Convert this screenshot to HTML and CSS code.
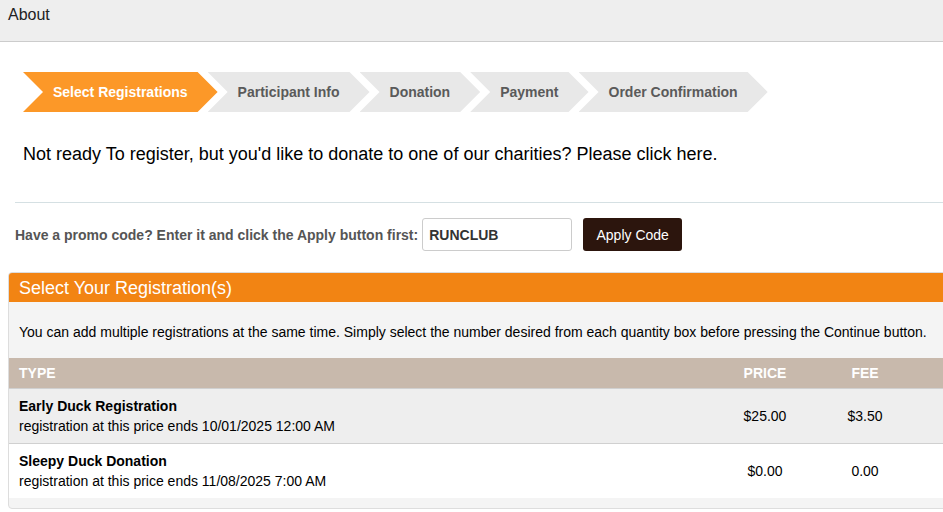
FILE: index.html
```html
<!DOCTYPE html>
<html lang="en">
<head>
<meta charset="utf-8">
<title>About</title>
<link rel="stylesheet" href="styles.css">
</head>
<body>
<header class="topbar">About</header>
<main class="page">
  <ol class="wizard">
    <li class="step active">Select Registrations</li>
    <li class="step">Participant Info</li>
    <li class="step">Donation</li>
    <li class="step">Payment</li>
    <li class="step">Order Confirmation</li>
  </ol>
  <p class="intro">Not ready To register, but you'd like to donate to one of our charities? Please click here.</p>
  <hr class="divider">
  <form class="promo">
    <label class="promo-label" for="promo">Have a promo code? Enter it and click the Apply button first:</label>
    <input class="promo-input" id="promo" type="text" value="RUNCLUB">
    <button class="promo-btn" type="button">Apply Code</button>
  </form>
  <section class="panel">
    <h2 class="panel-title">Select Your Registration(s)</h2>
    <p class="panel-note">You can add multiple registrations at the same time. Simply select the number desired from each quantity box before pressing the Continue button.</p>
    <table class="reg-table">
      <colgroup>
        <col>
        <col class="col-num">
        <col class="col-num">
        <col class="col-num">
      </colgroup>
      <thead>
        <tr>
          <th>TYPE</th>
          <th class="num">PRICE</th>
          <th class="num">FEE</th>
          <th class="num"></th>
        </tr>
      </thead>
      <tbody>
        <tr class="row-alt">
          <td><div class="reg-name">Early Duck Registration</div><div>registration at this price ends 10/01/2025 12:00 AM</div></td>
          <td class="num">$25.00</td>
          <td class="num">$3.50</td>
          <td class="num"></td>
        </tr>
        <tr>
          <td><div class="reg-name">Sleepy Duck Donation</div><div>registration at this price ends 11/08/2025 7:00 AM</div></td>
          <td class="num">$0.00</td>
          <td class="num">0.00</td>
          <td class="num"></td>
        </tr>
      </tbody>
    </table>
    <div class="panel-foot"></div>
  </section>
</main>
</body>
</html>
```
FILE: styles.css
```css
html, body {
  margin: 0;
  padding: 0;
}
body {
  font-family: "Liberation Sans", Arial, sans-serif;
  color: #111;
  background: #fff;
  overflow-x: hidden;
}

.topbar {
  height: 42px;
  box-sizing: border-box;
  background: #eeeeee;
  border-bottom: 1px solid #cccccc;
  padding: 6px 8px 0;
  font-size: 16px;
  line-height: 18px;
  color: #222;
}

.page {
  width: 1016px;
  padding-left: 8px;
}

.wizard {
  display: flex;
  list-style: none;
  margin: 30px 0 0 15px;
  padding: 0;
}
.step {
  height: 40px;
  line-height: 40px;
  padding: 0 30px 0 30px;
  background: #e8e8e8;
  color: #5a5a5a;
  font-weight: bold;
  font-size: 14px;
  white-space: nowrap;
  clip-path: polygon(0 0, calc(100% - 20px) 0, 100% 50%, calc(100% - 20px) 100%, 0 100%, 20px 50%);
}
.step + .step {
  margin-left: -10px;
}
.step.active {
  background: #fc9828;
  color: #fff;
}

.intro {
  margin: 31px 0 0 15px;
  font-size: 18px;
  line-height: 22px;
  color: #000;
}

.divider {
  border: 0;
  border-top: 1px solid #d5e0e3;
  height: 0;
  margin: 37px 0 0 7px;
}

.promo {
  display: flex;
  align-items: center;
  margin: 15px 0 0 7px;
}
.promo-label {
  font-size: 14px;
  font-weight: bold;
  color: #555;
  margin-right: 4px;
}
.promo-input {
  width: 150px;
  height: 33px;
  box-sizing: border-box;
  border: 1px solid #cccccc;
  border-radius: 3px;
  padding: 0 6px;
  font-family: "Liberation Sans", Arial, sans-serif;
  font-size: 14px;
  font-weight: bold;
  color: #333;
  margin: 0 11px 0 0;
}
.promo-btn {
  height: 33px;
  width: 99px;
  border: 0;
  border-radius: 3px;
  background: #2c150d;
  color: #fff;
  font-family: "Liberation Sans", Arial, sans-serif;
  font-size: 14px;
  padding: 0;
}

.panel {
  margin-top: 21px;
  width: 1008px;
  box-sizing: border-box;
  border: 1px solid #dddddd;
  border-radius: 4px;
  background: #f4f4f4;
  overflow: hidden;
}
.panel-title {
  margin: 0;
  background: #f28413;
  color: #fff;
  font-size: 18px;
  font-weight: normal;
  line-height: 22px;
  padding: 4px 10px 3px;
}
.panel-note {
  margin: 0;
  padding: 20px 10px 16px;
  font-size: 14px;
  line-height: 20px;
  color: #000;
}

.reg-table {
  width: 100%;
  border-collapse: collapse;
  table-layout: fixed;
  font-size: 14px;
  color: #000;
}
.col-num {
  width: 100px;
}
.reg-table th {
  background: #c8b9ac;
  color: #fff;
  font-size: 14px;
  font-weight: bold;
  text-align: left;
  height: 30px;
  padding: 0 10px;
}
.reg-table td {
  padding: 7px 10px;
  line-height: 20px;
  border-top: 1px solid #d0d0d0;
  background: #fff;
  vertical-align: middle;
}
.reg-table .row-alt td {
  background: #eeeeee;
}
.reg-table .num {
  text-align: center;
}
.reg-name {
  font-weight: bold;
}
.panel-foot {
  height: 10px;
}
```
